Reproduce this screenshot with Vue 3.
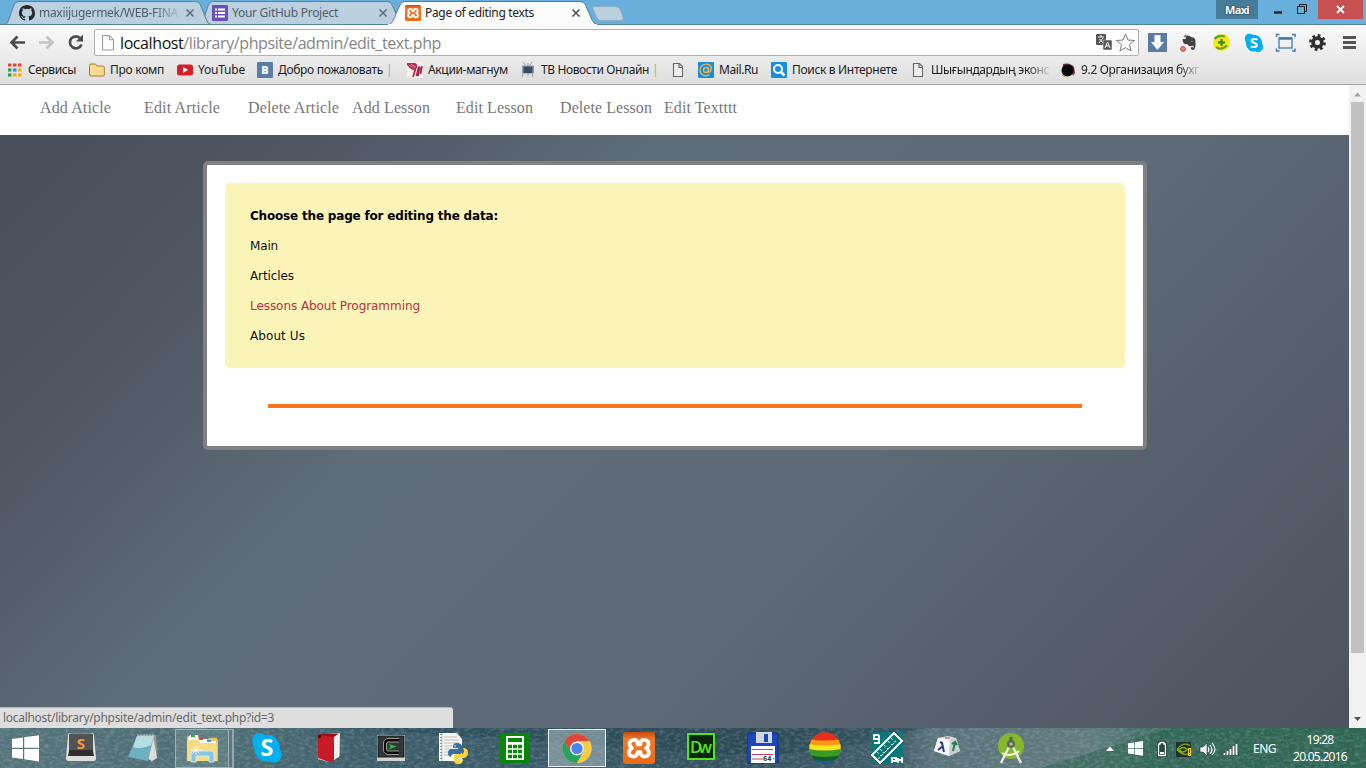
<script setup>
const tabs = [
  { title: 'maxiijugermek/WEB-FINA', kind: 'github', width: 193, text: 139, fade: true },
  { title: 'Your GitHub Project', kind: 'list', width: 193, text: 106 },
  { title: 'Page of editing texts', kind: 'xampp', width: 193, text: 109, active: true },
]

const bookmarks = [
  { label: 'Сервисы', kind: 'apps', x: 7, end: 89, text: 48 },
  { label: 'Про комп', kind: 'folder', x: 89, end: 177, text: 54 },
  { label: 'YouTube', kind: 'youtube', x: 177, end: 257, text: 47 },
  { label: 'Добро пожаловать', bar: true, kind: 'vk', x: 257, end: 407, text: 105 },
  { label: 'Акции-магнум', kind: 'magnum', x: 407, end: 520, text: 80 },
  { label: 'ТВ Новости Онлайн', bar: true, kind: 'tv', x: 520, end: 670, text: 108 },
  { label: '', kind: 'page', x: 670, end: 698, text: 0 },
  { label: 'Mail.Ru', kind: 'mail', x: 698, end: 771, text: 39 },
  { label: 'Поиск в Интернете', kind: 'search', x: 771, end: 910, text: 105 },
  { label: 'Шығындардың эконс', kind: 'page', x: 910, end: 1060, text: 118, fade: true },
  { label: '9.2 Организация бухг', kind: 'globe', x: 1060, end: 1210, text: 118, fade: true },
]

const nav = ['Add Aticle', 'Edit Article', 'Delete Article', 'Add Lesson', 'Edit Lesson', 'Delete Lesson', 'Edit Textttt']
const navWidths = [71, 76, 91, 78, 77, 92, 73]

const pages = [
  { label: 'Main', width: 28 },
  { label: 'Articles', width: 44 },
  { label: 'Lessons About Programming', width: 170, hover: true },
  { label: 'About Us', width: 55 },
]

// Spreads the letters of a label so that it fills the given width.
const vFit = {
  mounted(el, { value }) {
    const n = el.textContent.length
    if (!n || !value) return
    const natural = el.getBoundingClientRect().width
    el.style.letterSpacing = (value - natural) / n + 'px'
  },
}
</script>

<template>
  <div class="screen">
    <svg class="defs" width="0" height="0">
      <defs>
        <linearGradient id="orange" x1="0" y1="0" x2="0" y2="1">
          <stop offset="0" stop-color="#c9480c" /><stop offset=".22" stop-color="#f0792c" /><stop offset="1" stop-color="#ec6a15" />
        </linearGradient>
        <symbol id="xampp" viewBox="0 0 32 32">
          <rect width="32" height="32" rx="3" fill="url(#orange)" />
          <path d="M14.500 12.500h3C17 8.500 19.500 7.500 22 8c4.500 1 4.500 5.500 1 8.200 4 2.300 4 7.300-.5 8.300-3.500.5-5-1.500-5-4.500h-3c0 3-1.500 5-5 4.500-4.500-1-4.500-6-.5-8.300C5.500 13.500 5.500 9 10 8c2.500-.5 5 .5 4.500 4.500Z" fill="none" stroke="#fff" stroke-width="3.700" stroke-linejoin="round" />
        </symbol>
        <symbol id="skype" viewBox="0 0 30 30">
          <path d="M8 1c2 0 3.500.6 5 1.700C21 1.500 27.500 8 27 16c1.500 2 2 4 1.600 6.200C28 27 22 31 17.500 27.500 9.500 29 2.500 22.500 3 14 .5 10 .5 6 3 3.200 4.500 1.700 6 1 8 1Z" fill="#00aff0" />
          <text x="15" y="22.500" text-anchor="middle" font-size="22" font-weight="700" fill="#fff" font-family="Open Sans, sans-serif">S</text>
        </symbol>
        <symbol id="win" viewBox="0 0 27 27">
          <path d="M0 4 11 2.500V12.700H0ZM12.200 2.300 27 .2V12.700H12.200ZM0 14H11V24L0 22.500ZM12.200 14H27V26.500L12.200 24.200Z" fill="#fff" />
        </symbol>
      </defs>
    </svg>

    <header class="strip">
      <svg class="tab-shapes" width="640" height="25" viewBox="0 0 640 25">
        <path d="M199 25C203 21 206 13 208 6 210 2.500 211 1.500 214 1.500H387C390 1.500 391 3 393 7L399 20Q401 25 404 25Z" fill="#bccfdf" stroke="#567f9b" />
        <path d="M4 24.500C9 24.500 8 20 14 5Q15.500 1.500 19 1.500H195Q199 1.500 200.500 5L207 21Q208 24.500 211 24.500Z" fill="#bccfdf" stroke="#567f9b" />
        <path d="M0 24.500H640" stroke="#53839f" />
        <path d="M387 26C393 24 393 20 400 5Q401 1.500 405 1.500H580Q584 1.500 585.500 5L592 20Q594 24.500 598 25Z" fill="#fbfbfb" stroke="#537b96" />
        <path d="M388 25H597" stroke="#fafafa" stroke-width="2" />
        <path d="M594 6.500H616Q619 6.500 620 9L623 17Q624 20.500 621 20.500H601Q598 20.500 597 18L593 9Q592 6.500 594 6.500Z" fill="#bccfdf" stroke="#8badc7" />
      </svg>
      <div class="tabs">
        <div v-for="t in tabs" :key="t.title" class="tab" :class="{ active: t.active }">
          <svg v-if="t.kind === 'github'" width="16" height="16" viewBox="0 0 16 16"><path fill="#24292e" d="M8 0C3.580 0 0 3.580 0 8c0 3.540 2.290 6.530 5.470 7.590.4.070.55-.17.55-.38 0-.19-.01-.82-.01-1.490-2.010.37-2.530-.49-2.690-.94-.09-.23-.48-.94-.82-1.130-.28-.15-.68-.52-.01-.53.63-.01 1.080.58 1.230.82.72 1.210 1.870.87 2.330.66.07-.52.28-.87.51-1.070-1.780-.2-3.640-.89-3.640-3.950 0-.87.31-1.590.82-2.150-.08-.2-.36-1.020.08-2.120 0 0 .67-.21 2.200.82a7.600 7.600 0 0 1 4 0c1.530-1.040 2.200-.82 2.200-.82.44 1.100.16 1.920.08 2.120.51.56.82 1.270.82 2.150 0 3.070-1.870 3.750-3.650 3.950.29.25.54.73.54 1.480 0 1.070-.01 1.930-.01 2.200 0 .21.15.46.55.38A8 8 0 0 0 16 8c0-4.420-3.580-8-8-8Z" /></svg>
          <svg v-else-if="t.kind === 'list'" width="16" height="16"><rect width="16" height="16" rx="1" fill="#6a4fbe" /><path d="M3 4.500h2M3 8h2M3 11.500h2M6 4.500h7M6 8h7M6 11.500h7" stroke="#fff" stroke-width="2" /></svg>
          <svg v-else width="16" height="16"><use href="#xampp" /></svg>
          <div class="tab-label" :class="{ fade: t.fade }"><span v-fit="t.text">{{ t.title }}</span></div>
          <svg class="close" width="10" height="10"><path d="m1.500 1.500 7 7m0-7-7 7" stroke="currentColor" stroke-width="1.700" /></svg>
        </div>
      </div>
      <div class="caption">
        <div class="user"><span v-fit="24">Maxi</span></div>
        <svg class="cap-btn" width="62" height="20"><path d="M18 12.500h8" stroke="#222" stroke-width="2.400" /><path d="M41.500 6.500h7v7h-7zM43.500 6V4.500h7v7H49" fill="none" stroke="#222" /></svg>
        <div class="quit"><svg width="9" height="9"><path d="m1 1 7 7m0-7-7 7" stroke="#fff" stroke-width="1.800" /></svg></div>
      </div>
    </header>

    <div class="chrome">
      <div class="toolbar">
        <svg class="nav-buttons" width="94" height="32" viewBox="0 0 94 32" fill="none">
          <path d="M25 17.500H12M17.500 11.500l-6 6 6 6" stroke="#4b4b4b" stroke-width="2.700" />
          <path d="M39 17.500H52M46.500 11.500l6 6-6 6" stroke="#c3c3c3" stroke-width="2.700" />
          <path d="M80.500 13.500A6 6 0 1 0 81.500 19.500" stroke="#4b4b4b" stroke-width="2.700" /><path d="M83 9.500V16.500H76Z" fill="#4b4b4b" />
        </svg>
        <div class="omnibox">
          <svg width="14" height="18" viewBox="0 0 14 18"><path d="M1.500 1.500h7l4 4v10.500h-11zM8.500 1.500v4.200h4" fill="#fdfdfd" stroke="#969696" /></svg>
          <div class="url"><span v-fit="321"><b>localhost</b>/library/phpsite/admin/edit_text.php</span></div>
          <svg class="omni-icons" width="42" height="22" viewBox="0 0 42 22">
            <rect x="0" y="2" width="10" height="11" rx="1" fill="#555" /><path d="M2 5h6M5 3v2M3 11l4-5M3.500 7 7 11" stroke="#fff" fill="none" />
            <rect x="7" y="8" width="9" height="10" rx="1" fill="#555" stroke="#f5f5f5" stroke-width=".5" /><path d="m9 16 2.500-6 2.500 6M10 14h3" stroke="#fff" fill="none" />
            <path d="m29.500 2 2.500 6 6.500.5-5 4.200 1.600 6.300-5.600-3.400-5.600 3.400 1.600-6.300-5-4.200 6.500-.5Z" fill="#fff" stroke="#777" stroke-linejoin="round" />
          </svg>
        </div>
        <svg class="extensions" width="227" height="31" viewBox="0 0 227 31">
          <rect x="9" y="8" width="19" height="19" fill="#587ca6" /><path d="M15.500 10h6v7H25l-6.500 8-6.500-8h3.500Z" fill="#fff" />
          <path d="M47 10.500q4-.5 5 1.500 3 0 4 2c1 4 .8 11-2 11-2.500 0-3-3-1-3l1-.2-.4 1.500 1-.8V21c-2-1-3 .5-4.500 0s-1.200-1.800-2-2c-2 .5-4.500 0-4.500-5h3Z" fill="#414141" /><path d="m44 12 3-2.500V12ZM52 16.500h2" fill="#333" stroke="#ddd" stroke-width=".5" /><circle cx="44" cy="24" r="2.400" fill="#ed8070" stroke="#b94b42" />
          <circle cx="82.500" cy="17.500" r="8.500" fill="#fce80f" /><path d="M75.500 14Q79 9.500 86 11.500M77 22q5 4 11-1.500" stroke="#59a431" stroke-width="2.200" fill="none" /><path d="M82.500 14v7M79 17.500h7" stroke="#36941e" stroke-width="2.400" />
          <svg x="105" y="8" width="20" height="20"><use href="#skype" /></svg>
          <rect x="140" y="13" width="13" height="10" fill="none" stroke="#427ba8" stroke-width="1.300" /><path d="M140 13.500h13" stroke="#427ba8" stroke-width="2.500" /><path d="M137.500 12V9.500h3M153 9.500h3V12M156 23.500V26h-3M140.500 26h-3v-2.500" stroke="#427ba8" stroke-width="1.500" fill="none" />
          <circle cx="178.500" cy="17.500" r="4.400" stroke="#303030" stroke-width="3.700" fill="none" /><circle cx="178.500" cy="17.500" r="6.900" fill="none" stroke="#303030" stroke-width="3" stroke-dasharray="2.700 2.720" />
          <path d="M204 12.500h13M204 17.500h13M204 22.500h13" stroke="#555" stroke-width="2.800" />
        </svg>
      </div>
      <div class="bookmarks">
        <div v-for="b in bookmarks" :key="b.x" class="bookmark" :style="{ width: b.end - b.x + 'px' }">
          <svg width="16" height="16" viewBox="0 0 16 16">
            <g v-if="b.kind === 'apps'"><path d="M1 3h4M6 3h4M11 3h4" stroke="#e94335" stroke-width="3.200" stroke-dasharray="3.500 1.600" /><path d="M1 8h3.500" stroke="#30a058" stroke-width="3.200" /><path d="M6 8h3.500" stroke="#4285f4" stroke-width="3.200" /><path d="M11 8h3.500" stroke="#f2b600" stroke-width="3.200" /><path d="M1 13h3.500" stroke="#30a058" stroke-width="3.200" /><path d="M6 13h3.500M11 13h3.500" stroke="#f2ae12" stroke-width="3.200" /></g>
            <path v-else-if="b.kind === 'folder'" d="M.5 3.500Q.5 2 2 2h4.500L8 4h6q1.300 0 1.300 1.500V13q0 1-1.300 1H2q-1.500 0-1.500-1Z" fill="#fbdb91" stroke="#ad7a2d" />
            <g v-else-if="b.kind === 'youtube'"><rect y="2.500" width="16" height="11" rx="2.500" fill="#d52027" /><path d="m6 5 5 3-5 3Z" fill="#fff" /></g>
            <g v-else-if="b.kind === 'vk'"><rect width="16" height="16" rx="1" fill="#587ea8" /><text x="8" y="12" text-anchor="middle" font-size="11" font-weight="800" fill="#fff" font-family="Open Sans, sans-serif">B</text></g>
            <g v-else-if="b.kind === 'magnum'"><rect width="16" height="16" fill="#f5f1f1" /><path d="M0 1h8q3 1 2 5L7 8Q4 8 0 3Z" fill="#b32a55" /><path d="m6 15 2.500-8M9.500 14l2-8.500q1.500-1 1.200.5L11 14M13.500 12l1.500-8" stroke="#b32347" stroke-width="1.700" fill="none" /><path d="m2 3 6 3M4 2l5 3" stroke="#eeb9c7" stroke-width=".6" /></g>
            <g v-else-if="b.kind === 'tv'"><path d="m3 0 2 3m7-3-2 3M3 12l-1 3m10-3 1 3M8 1v3m0 7v3" stroke="#999" /><rect x="2" y="3.500" width="12" height="8" fill="#929ba0" /><rect x="3.500" y="4.500" width="9" height="6.500" fill="#344e67" /></g>
            <path v-else-if="b.kind === 'page'" d="M3.500 1.500h6l3 3v10h-9zM9 1.500v4h3.500" fill="#eee" stroke="#666" stroke-width="1.100" />
            <g v-else-if="b.kind === 'mail'"><rect width="16" height="16" rx="1" fill="#168de2" /><circle cx="8" cy="8" r="2.500" fill="none" stroke="#f5b536" stroke-width="1.400" /><path d="M10.500 5.500V9q.5 2 2 .3Q15 3.500 9.500 2.300C5.500 1.500 2 4.500 2 8s3 6.500 7 5.600l2.500-1" stroke="#f5b536" stroke-width="1.400" fill="none" /></g>
            <g v-else-if="b.kind === 'search'"><rect width="16" height="16" rx="1" fill="#168de2" /><circle cx="7" cy="7" r="4" fill="none" stroke="#fff" stroke-width="2" /><path d="m10 10 3.500 3.500" stroke="#fff" stroke-width="2.500" /></g>
            <g v-else><rect width="16" height="16" fill="#e9e4e0" /><path d="M3 2q7-2 11 3l1 6-2 2L3 5Z" fill="#6c254c" /><circle cx="7.500" cy="8.500" r="6" fill="#080a09" /><path d="m2 13 3 2m8-1 2-3" stroke="#d0783e" /></g>
          </svg>
          <div v-if="b.label" class="bm-label" :class="{ fade: b.fade }"><span v-fit="b.text">{{ b.label }}</span></div>
          <span v-if="b.bar" class="bar">|</span>
        </div>
      </div>
    </div>

    <main class="viewport">
      <div class="page">
        <nav class="site-nav">
          <div v-for="(n, i) in nav" :key="n" class="nav-item"><span v-fit="navWidths[i]">{{ n }}</span></div>
        </nav>
        <section class="card">
          <div class="panel">
            <p class="heading"><span v-fit="248">Choose the page for editing the data:</span></p>
            <p v-for="p in pages" :key="p.label" :class="{ hover: p.hover }"><span v-fit="p.width">{{ p.label }}</span></p>
          </div>
          <div class="rule"></div>
        </section>
        <div class="status"><span v-fit="271">localhost/library/phpsite/admin/edit_text.php?id=3</span></div>
      </div>
      <div class="scrollbar">
        <svg width="17" height="17"><path d="M5 11.500 8.500 7.500 12 11.500Z" fill="#a0a0a0" /></svg>
        <div class="thumb"></div>
        <svg width="17" height="17"><path d="M5 6 8.500 10 12 6Z" fill="#505050" /></svg>
      </div>
    </main>

    <footer class="taskbar">
      <svg class="wallpaper" width="1366" height="40" viewBox="0 0 1366 40">
        <defs>
          <linearGradient id="ground"><stop offset="0" stop-color="#56737b" /><stop offset=".18" stop-color="#4d6b74" /><stop offset=".27" stop-color="#3c5e6b" /><stop offset=".4" stop-color="#3a5968" /><stop offset=".52" stop-color="#36515e" /><stop offset=".66" stop-color="#425e6a" /><stop offset=".68" stop-color="#59717a" /><stop offset=".8" stop-color="#607b7e" /><stop offset=".85" stop-color="#426e64" /><stop offset="1" stop-color="#386b5a" /></linearGradient>
          <filter id="grain" x="0" y="0" width="100%" height="100%"><feTurbulence type="fractalNoise" baseFrequency=".2 .35" numOctaves="3" seed="8" /><feColorMatrix type="matrix" values="0 0 0 0 .7  0 0 0 0 .83  0 0 0 0 .82  1.200 0 0 0 -.5" /></filter>
        </defs>
        <rect width="1366" height="40" fill="url(#ground)" />
        <path d="M340 0H925Q800 35 690 25T340 0Z" fill="#1e3b4a" opacity=".35" />
        <path d="M1040 40Q1100 22 1170 0H1366V40Z" fill="#24604b" opacity=".5" />
        <path d="m1060 38 16-8 5 8 14-22 7 20 18-18 4 16 24-26 2 22 22-20 1 28 27-26 5 16 21-18 5 26 24-20 9 16 22-26 3 25 20-20 12 24" fill="none" stroke="#71a18a" opacity=".2" />
        <rect width="1366" height="40" filter="url(#grain)" opacity=".4" />
      </svg>
      <div class="start"><svg width="27" height="27"><use href="#win" /></svg></div>
      <div class="apps">
        <div class="app"><svg width="32" height="32" viewBox="0 0 32 32"><path d="M3 3Q3 1 5 1h22q2 0 2 2l2 23q0 3-2 3H3q-2 0-2-3Z" fill="#dedede" /><path d="M4 3q0-1.500 2-1.500h20q2 0 2 1.500v16l1 5H3l1-5Z" fill="#303030" /><path d="M4 4q0-2 2-2h20q2 0 2 2v14H4Z" fill="#535353" /><text x="16" y="17" text-anchor="middle" font-size="15" font-weight="700" fill="#f69a32" font-family="Open Sans, sans-serif">S</text></svg></div>
        <div class="app"><svg width="32" height="32" viewBox="0 0 32 32"><path d="M11 3 29 3 30 26 24 30Z" fill="#a59a80" /><path d="m26 4 4 22-5 3-5-3Z" fill="#d9dedc" /><path d="M10 4H27L21 29 1 25Z" fill="#6eb0c0" /><path d="M10 4H27L24 13Q14 18 6 15Z" fill="#b5dde5" /><path d="M11 2v3m3-3v3m3-3v3m3-3v3m3-3v3m3-3v3" stroke="#ccc" /></svg></div>
        <div class="app explorer"><div class="task-frame"></div><svg width="32" height="32" viewBox="0 0 32 32"><path d="M1 6Q1 4 3 4h9l2 3h8l2-1h7l1 3v20H1Z" fill="#e5c35e" /><path d="M4 3h8v4h9v2h9v4H2V6Z" fill="#fff" /><path d="M5 4h4" stroke="#2db44b" stroke-width="2.500" /><path d="M13 7h4" stroke="#ce4439" stroke-width="2" /><path d="M21 9h4" stroke="#3391d5" stroke-width="2" /><path d="M1 8h11l2 3h17v18H1Z" fill="#f5dc83" /><path d="M5 30V22q0-3 3-3h17q3 0 3 3v8h-5v-6H10v6Z" fill="#84c4e6" stroke="#c9ecfa" /><path d="M5 18h11M10 13v10M6.500 14.500l7 7m0-7-7 7" stroke="#fff" stroke-width=".7" /></svg></div>
        <div class="app"><svg width="32" height="32"><use href="#skype" /></svg></div>
        <div class="app"><svg width="32" height="32" viewBox="0 0 32 32"><path d="M5 3 9 1H27L26 25 16 30 5 27Z" fill="#edebe5" /><path d="M5 3 9 1 26 1.500 21 5V29l-5 1L5 26Z" fill="#c91b27" /><path d="m5 3 3-1h17l-4 3Z" fill="#94121b" /><path d="M21 5 26.500 1.500V24L21 28Z" fill="#f5f1ea" /><path d="M5 3h3v3H5Z" fill="#3a1513" /></svg></div>
        <div class="app"><svg width="32" height="32" viewBox="0 0 32 32"><rect x="2" y="3" width="28" height="26" fill="#d2d2d0" /><rect x="3" y="4" width="26" height="21" fill="#333738" stroke="#1d1d1d" /><path d="M24 8H13Q10 8 10 11v7q0 3 3 3h11" fill="none" stroke="#080808" stroke-width="4" /><path d="M24 6.500H13Q8.500 7 8.500 11v7q0 4 4.500 4.500h11M24 10H13q-1.500 0-1.500 2v5q0 2 1.500 2h11" fill="none" stroke="#bbb" stroke-width=".8" /><path d="m13 12 9 2.500-9 3 3-3Z" fill="#1dce36" /></svg></div>
        <div class="app"><svg width="32" height="32" viewBox="0 0 32 32"><path d="M2 1h18l5 6v22H2Z" fill="#f6f6f6" /><path d="M5 1v28M7 5h13M7 8h15M7 11h15M7 14h8M7 17h8M7 20h5M7 23h5" stroke="#bcbcbc" /><path d="M4 2v27" stroke="#333" stroke-dasharray="1 2" /><path d="M16 14q0-3 4-3t5 3v6q0 2-2 2h-6q-3 0-3 3-3-1-3-4 0-4 4-4h6v-1h-5Z" fill="#356f9e" /><path d="M26 16q5 0 5 5 0 4-4 5h-6v1h5q0 5-4 5-5 0-5-3v-5q0-2 3-2h4q3 0 3-3Z" fill="#ffd43b" /><circle cx="18" cy="14" r=".8" fill="#fff" /><circle cx="24" cy="29" r=".8" fill="#fff" /></svg></div>
        <div class="app"><svg width="32" height="32" viewBox="0 0 32 32"><rect x="1" y="1" width="30" height="30" fill="#078607" /><rect x="7" y="4" width="18" height="24" rx="1" fill="#fff" /><rect x="9" y="6" width="14" height="4" fill="#078607" /><path d="M9 14.500h14M9 19.500h14M9 24.500h14" stroke="#078607" stroke-width="3.500" stroke-dasharray="4 1" /></svg></div>
        <div class="app"><div class="active-frame"></div><svg width="32" height="32" viewBox="0 0 32 32"><circle cx="16" cy="16.500" r="14.500" fill="#f5c939" /><path d="M3.440 9.250A14.500 14.500 0 0 1 28.560 9.250H16L9.700 20Z" fill="#dc483b" /><path d="M3.440 9.250A14.500 14.500 0 0 0 16 31L22.300 20H9.700Z" fill="#25a264" /><path d="M28.560 9.250H16L22.300 20 16 31A14.500 14.500 0 0 0 28.560 9.250Z" fill="#f7cd45" /><circle cx="16" cy="16.500" r="7" fill="#eef3f4" /><circle cx="16" cy="16.500" r="5.600" fill="#4b83f0" /></svg></div>
        <div class="app"><svg width="32" height="32"><use href="#xampp" /></svg></div>
        <div class="app"><svg width="32" height="32" viewBox="0 0 32 32"><rect x="3" y="2" width="26" height="25" fill="#0b260f" stroke="#4fe61a" stroke-width="2" /><text x="16" y="20.500" text-anchor="middle" font-size="16.500" font-weight="600" textLength="22" fill="#58e51b" font-family="Open Sans, sans-serif">Dw</text></svg></div>
        <div class="app"><svg width="32" height="32" viewBox="0 0 32 32"><path d="M0 1H30l1 2v28H0Z" fill="#1b46bd" stroke="#112e8a" /><rect x="9" y="0" width="16" height="11" fill="#d0d4df" /><rect x="17" y="2" width="4" height="8" fill="#1946bd" /><rect x="4" y="14" width="24" height="17" fill="#fff" /><path d="M5 17.500h21M5 22.500h21M5 27h11" stroke="#d23d50" /><text x="16" y="29" font-size="7" font-weight="700" fill="#222" font-family="Liberation Mono, monospace">64·</text></svg></div>
        <div class="app"><svg width="32" height="32" viewBox="0 0 32 32"><defs><clipPath id="ball"><circle cx="16" cy="16" r="15.700" /></clipPath></defs><g clip-path="url(#ball)"><path d="M0 0h32v8Q16 10 0 8Z" fill="#e9301a" /><path d="M0 7q16 3 32 0v8H0Z" fill="#ff9715" /><path d="M0 12q16 3 32 0v8H0Z" fill="#fae61d" /><path d="M0 17q16 3 32 0v8H0Z" fill="#399b25" /><path d="M0 23q16 4 32 0v9H0Z" fill="#145e2b" /><path d="M2 27q14 4 28 0v5H2Z" fill="#1c5ca4" /></g></svg></div>
        <div class="app"><svg width="32" height="32" viewBox="0 0 32 32" shape-rendering="crispEdges"><rect width="32" height="32" fill="#08777a" /><path d="M1 23 23 1 31 9 9 31Z" fill="none" stroke="#fff" stroke-width="1.500" /><path d="m6 20 4 4m-1-7 4 4m0-8 4 4m0-8 4 4m-1-7 4 4M7 27l18-18" stroke="#fff" fill="none" stroke-dasharray="3 1" /><path d="M8 3H3v4h5V3v8H3M21 31v-5h4v3h-4m6-3v5m0-3h4m0-3v6" stroke="#fff" stroke-width="1.700" fill="none" /></svg></div>
        <div class="app lambda"><svg width="32" height="32" viewBox="0 0 32 32"><path d="M7 6 17 4l8 2 4 13-11 5-15-5Z" fill="#dbe0e4" /><path d="m7 6 12 1-1 17L3 19Z" fill="#f5f5f8" /><path d="m19 7 6-1 4 13-11 5Z" fill="#c5d1d0" /><path d="m9 10 2 1 2 9m-1-6-5 4" fill="none" stroke="#36377f" stroke-width="2" /><path d="m22 19 2-9m-3 2 3-2 2 3" fill="none" stroke="#247c49" stroke-width="2" /><path d="M14 6h5" stroke="#db8c80" stroke-width="2" /></svg></div>
        <div class="app"><svg width="32" height="32" viewBox="0 0 32 32"><circle cx="16" cy="14" r="13" fill="#85b72e" /><path d="M14.500 14 6 31M17.500 14 26 31" stroke="#e9ecdb" stroke-width="2.400" /><path d="M7 21Q16 26 24 19" fill="none" stroke="#f4f4e9" stroke-width="2" /><circle cx="16" cy="12" r="4" fill="#5e6c57" /><circle cx="16" cy="12" r="1.600" fill="#b9c9a0" /><path d="M16 5v4" stroke="#526252" stroke-width="3" /></svg></div>
      </div>
      <div class="tray">
        <svg width="146" height="24" viewBox="0 0 146 24">
          <path d="M9 15 13 10.500 17 15Z" fill="#fff" />
          <svg x="31" y="5" width="15" height="15"><use href="#win" /></svg>
          <path d="M61.500 8H63V6.500h4V8h1.500V19.500h-7Z" fill="none" stroke="#182b29" stroke-width="3" /><path d="M61.500 8H63V6.500h4V8h1.500V19.500h-7Z" fill="#254c42" stroke="#fff" stroke-width="1.300" /><path d="M63 17h4" stroke="#fff" stroke-width="2" />
          <rect x="79" y="6" width="15" height="15" rx="1" fill="#272d33" /><path d="M80 13.500q6-8 13-4M80 13.500q6 7 12 4M82 13.500q5-4 8 0-4 5-8 0Z" fill="none" stroke="#78b60c" stroke-width="1.300" /><path d="M91 12h3v8h-3Z" fill="#ffd320" /><path d="M92.500 13v4m0 1v1" stroke="#333" />
          <path d="M103 11h3l4-4v13l-4-4h-3Z" fill="#fff" stroke="#172b29" stroke-width=".6" /><path d="M111 11q2 2.500 0 5M113 9q4 4.500 0 9M115 7q6 6.500 0 12" fill="none" stroke="#fff" stroke-width="1.100" />
          <path d="M127.500 17v2M130.500 15v4M133.500 13v6M136.500 10v9M139.500 8v11" stroke="#182b29" stroke-width="3.200" /><path d="M127.500 17v2M130.500 15v4M133.500 13v6M136.500 10v9M139.500 8v11" stroke="#fff" stroke-width="2" />
        </svg>
        <div class="lang"><span v-fit="23">ENG</span></div>
        <div class="clock"><div><span v-fit="27">19:28</span></div><div><span v-fit="54">20.05.2016</span></div></div>
      </div>
    </footer>
  </div>
</template>

<style>
html, body { margin: 0; overflow: hidden; }
</style>

<style scoped>
.screen { width: 1366px; height: 768px; overflow: hidden; display: flex; flex-direction: column; font: 12px/16px "Noto Sans", "Open Sans", sans-serif; color: #1c1c1c; }
.screen span { display: inline-block; white-space: pre; }
.screen svg { flex: none; display: block; }
.defs { position: absolute; }
.strip { position: relative; height: 25px; flex: none; background: #69afdb; box-shadow: inset 0 -1px #53839f; display: flex; justify-content: space-between; }
.tab-shapes { position: absolute; left: 0; top: 0; }
.tabs { position: relative; display: flex; padding-left: 19px; }
.tab { width: 193px; height: 25px; display: flex; align-items: center; box-sizing: border-box; color: #50606b; padding: 1px 0 0; }
.tab-label { width: 140px; margin-left: 4px; margin-right: 6px; overflow: hidden; }
.tab .close { color: #63717c; }
.tab.active { color: #222; }
.tab.active .close { color: #555; }
.fade { -webkit-mask-image: linear-gradient(90deg, #000 82%, transparent 103%); mask-image: linear-gradient(90deg, #000 82%, transparent 103%); }
.caption { position: relative; display: flex; height: 19px; padding-right: 3px; }
.user { width: 42px; height: 19px; background: #467b99; color: #fff; font: 700 11px/19px "Open Sans", sans-serif; text-align: center; text-shadow: 0 0 2px #222; }
.quit { width: 45px; background: #c75050; display: flex; align-items: center; justify-content: center; }
.cap-btn { margin-left: -2px; }
.chrome { height: 60px; flex: none; box-sizing: border-box; background: linear-gradient(#fafafa, #dedede); border-bottom: 1px solid #a3a3a3; }
.toolbar { height: 31px; display: flex; }
.omnibox { width: 1045px; height: 27px; margin-top: 4px; box-sizing: border-box; border: 1px solid #b0b0b0; border-radius: 2px; background: #fff; display: flex; align-items: center; padding: 0 0 0 6px; }
.url { margin-left: 5px; flex: 1; font: 16px/22px "Open Sans", sans-serif; color: #858585; }
.url b { font-weight: 400; color: #111; }
.bookmarks { height: 28px; display: flex; align-items: center; padding-left: 7px; }
.bookmark { flex: none; display: flex; align-items: center; gap: 5px; font-size: 12px; }
.bm-label { overflow: hidden; }
.bar { color: #aaa; margin-left: -2px; }
.viewport { height: 643px; flex: none; display: flex; }
.page { position: relative; width: 1349px; background: linear-gradient(134deg, #4a505b 4%, #4e5661 18%, #5e6b78 36%, #5e6a77 62%, #545d69 84%, #4d525e); }
.site-nav { height: 50px; box-sizing: border-box; background: #fff; padding: 14px 0 0 40px; display: flex; font: 16px/18px "Liberation Serif", serif; color: #777; }
.nav-item { width: 104px; flex: none; }
.card { width: 944px; height: 289px; box-sizing: border-box; margin: 26px 0 0 203px; background: #fff; border: 4px solid #808080; border-radius: 5px; padding: 18px 18px 0; }
.panel { height: 185px; box-sizing: border-box; background: #faf4b8; border-radius: 5px; padding: 26px 25px 0; font: 12px/15px "DejaVu Sans", sans-serif; color: #111; }
.panel p { margin: 0 0 15px; height: 15px; }
.panel .heading { font-weight: 700; color: #000; }
.panel .hover { color: #bb3142; }
.rule { height: 4px; margin: 36px 43px 0; background: #fb7417; }
.status { position: absolute; left: 0; bottom: 0; width: 453px; height: 21px; box-sizing: border-box; background: #dedede; border-top: 1px solid #b8b8b8; border-radius: 0 3px 0 0; padding: 2px 3px; color: #686868; line-height: 16px; }
.scrollbar { width: 17px; background: #f1f1f1; display: flex; flex-direction: column; align-items: center; }
.thumb { width: 13px; height: 551px; background: #c1c1c1; margin-bottom: 58px; }
.taskbar { position: relative; height: 40px; flex: none; display: flex; overflow: hidden; }
.wallpaper { position: absolute; left: 0; top: 0; }
.start { position: relative; width: 50px; display: flex; align-items: center; justify-content: center; }
.apps { display: flex; position: relative; }
.app { width: 62px; height: 40px; position: relative; display: flex; align-items: center; justify-content: center; }
.app svg { position: relative; }
.explorer > svg { left: -3px; }
.lambda > svg { left: -2px; }
.task-frame { position: absolute; left: 1px; top: 1px; width: 52px; height: 37px; border: 1px solid #9eb1b6; background: #a3bdbe33; box-shadow: 4px 0 0 -1px #5b7881, 5px 0 0 #91a9af; }
.active-frame { position: absolute; left: 2px; top: 1px; width: 56px; height: 36px; border: 1px solid #e6eef0; background: #a5b5bd99; }
.tray { position: relative; margin-left: auto; margin-right: 8px; width: 261px; display: flex; align-items: center; color: #fff; }
.lang { margin-left: 10px; width: 30px; white-space: nowrap; margin-top: 2px; }
.clock { width: 72px; margin-left: 1px; text-align: center; line-height: 17px; }
</style>
